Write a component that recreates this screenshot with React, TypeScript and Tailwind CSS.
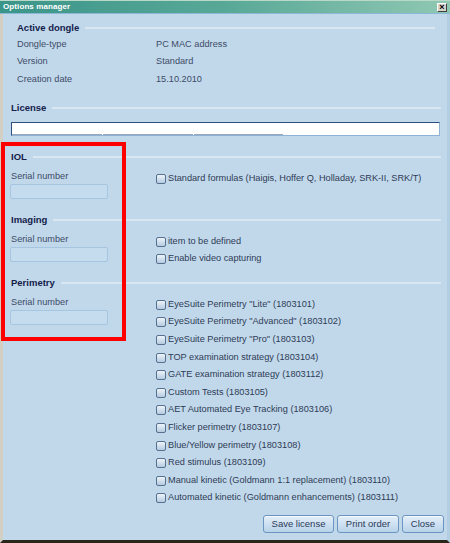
import React from 'react'

const dongleRows = [
  ['Dongle-type', 'PC MAC address'],
  ['Version', 'Standard'],
  ['Creation date', '15.10.2010'],
]

const perimetryItems = [
  'EyeSuite Perimetry "Lite" (1803101)',
  'EyeSuite Perimetry "Advanced" (1803102)',
  'EyeSuite Perimetry "Pro" (1803103)',
  'TOP examination strategy (1803104)',
  'GATE examination strategy (1803112)',
  'Custom Tests (1803105)',
  'AET Automated Eye Tracking (1803106)',
  'Flicker perimetry (1803107)',
  'Blue/Yellow perimetry (1803108)',
  'Red stimulus (1803109)',
  'Manual kinetic (Goldmann 1:1 replacement) (1803110)',
  'Automated kinetic (Goldmann enhancements) (1803111)',
]

function Heading({ title, className = '' }: { title: string; className?: string }) {
  return (
    <div className={`h-[16px] flex items-center ${className}`}>
      <span className="text-[9.5px] font-bold text-[#14204a] whitespace-nowrap">{title}</span>
      <div className="flex-1 h-[2px] ml-[6px] bg-[#d9e7f3]" />
    </div>
  )
}

function Check({ label }: { label: string }) {
  return (
    <div className="h-[17.6px] flex items-center">
      <div className="w-[10px] h-[10px] rounded-[2px] border border-[#56708f] bg-gradient-to-b from-[#eef4fa] to-[#b5cbe0] shrink-0" />
      <span className="ml-[2px] text-[9.2px] text-[#2e3b55] whitespace-nowrap">{label}</span>
    </div>
  )
}

function Serial() {
  return (
    <div className="w-[145px] shrink-0 flex flex-col">
      <div className="h-[14px] flex items-center text-[9.2px] text-[#3d4b66]">Serial number</div>
      <div className="-ml-[1px] w-[98px] h-[15px] rounded-[2px] border border-[#a5c5e1] bg-[#c5dcee]" />
    </div>
  )
}

function Btn({ label, w }: { label: string; w: string }) {
  return (
    <button
      className={`${w} h-[18px] rounded-[3px] border border-[#6b95c1] bg-gradient-to-b from-[#e4eff9] to-[#b8d2e9] text-[9.5px] text-[#2b3a57] shadow-[inset_0_1px_0_#f4f9fd]`}
    >
      {label}
    </button>
  )
}

export default function App() {
  return (
    <div className="relative w-[450px] h-[543px] overflow-hidden flex flex-col bg-[#c1d8eb] font-['Liberation_Sans',Arial,sans-serif]">
      {/* Title bar */}
      <div className="h-[14px] shrink-0 flex items-center justify-between bg-gradient-to-r from-[#3a9589] via-[#58a897] to-[#8fc8b3] border-t border-t-[#b9d8c8] border-b border-b-[#8db7d7] pl-[3px] pr-[3px]">
        <span className="text-[8px] font-bold text-white tracking-[0.1px]">Options manager</span>
        <div className="w-[10px] h-[9px] flex items-center justify-center bg-[#d8d4cb] border border-t-white border-l-white border-r-[#404040] border-b-[#404040] text-[9px] leading-none font-bold text-black">
          ×
        </div>
      </div>

      {/* Body */}
      <div className="flex-1 flex flex-col pl-[8px] pr-[6px] border-l-[3px] border-l-[#d3cfc5] border-r-[3px] border-r-[#b3cde3] border-b-[3px] border-b-[#2a2519]">
        {/* Active dongle */}
        <div className="px-[6px] mt-[6px]">
          <Heading title="Active dongle" />
          {dongleRows.map(([k, v]) => (
            <div key={k} className="h-[17.6px] flex items-center text-[9.2px] text-[#3d4b66]">
              <span className="w-[139px] shrink-0">{k}</span>
              <span>{v}</span>
            </div>
          ))}
        </div>

        {/* License */}
        <Heading title="License" className="mt-[11px]" />
        <div className="mt-[6px] mr-[1px] h-[14px] flex flex-col justify-end bg-white border border-[#2f507f] border-r-[#8db2d6] border-b-[#8db2d6]">
          <div className="flex gap-[1px]">
            <div className="w-[90px] h-[1px] bg-[#9aa7b6]" />
            <div className="w-[90px] h-[1px] bg-[#9aa7b6]" />
            <div className="w-[89px] h-[1px] bg-[#9aa7b6]" />
          </div>
        </div>

        {/* IOL */}
        <Heading title="IOL" className="mt-[13px]" />
        <div className="mt-[5px] flex">
          <Serial />
          <div className="flex flex-col">
            <Check label="Standard formulas (Haigis, Hoffer Q, Holladay, SRK-II, SRK/T)" />
          </div>
        </div>

        {/* Imaging */}
        <Heading title="Imaging" className="mt-[13px]" />
        <div className="mt-[5px] flex">
          <Serial />
          <div className="flex flex-col">
            <Check label="item to be defined" />
            <Check label="Enable video capturing" />
          </div>
        </div>

        {/* Perimetry */}
        <Heading title="Perimetry" className="mt-[7px]" />
        <div className="mt-[5px] flex">
          <Serial />
          <div className="flex flex-col">
            {perimetryItems.map((p) => (
              <Check key={p} label={p} />
            ))}
          </div>
        </div>

        {/* Buttons */}
        <div className="mt-[8px] -mr-[3px] flex justify-end gap-[3px]">
          <Btn label="Save license" w="w-[71px]" />
          <Btn label="Print order" w="w-[62px]" />
          <Btn label="Close" w="w-[42px]" />
        </div>
      </div>

      {/* Red annotation frame */}
      <div className="absolute left-[1px] top-[142px] w-[125px] h-[199px] border-[4px] border-[#ff0000] pointer-events-none" />
    </div>
  )
}
